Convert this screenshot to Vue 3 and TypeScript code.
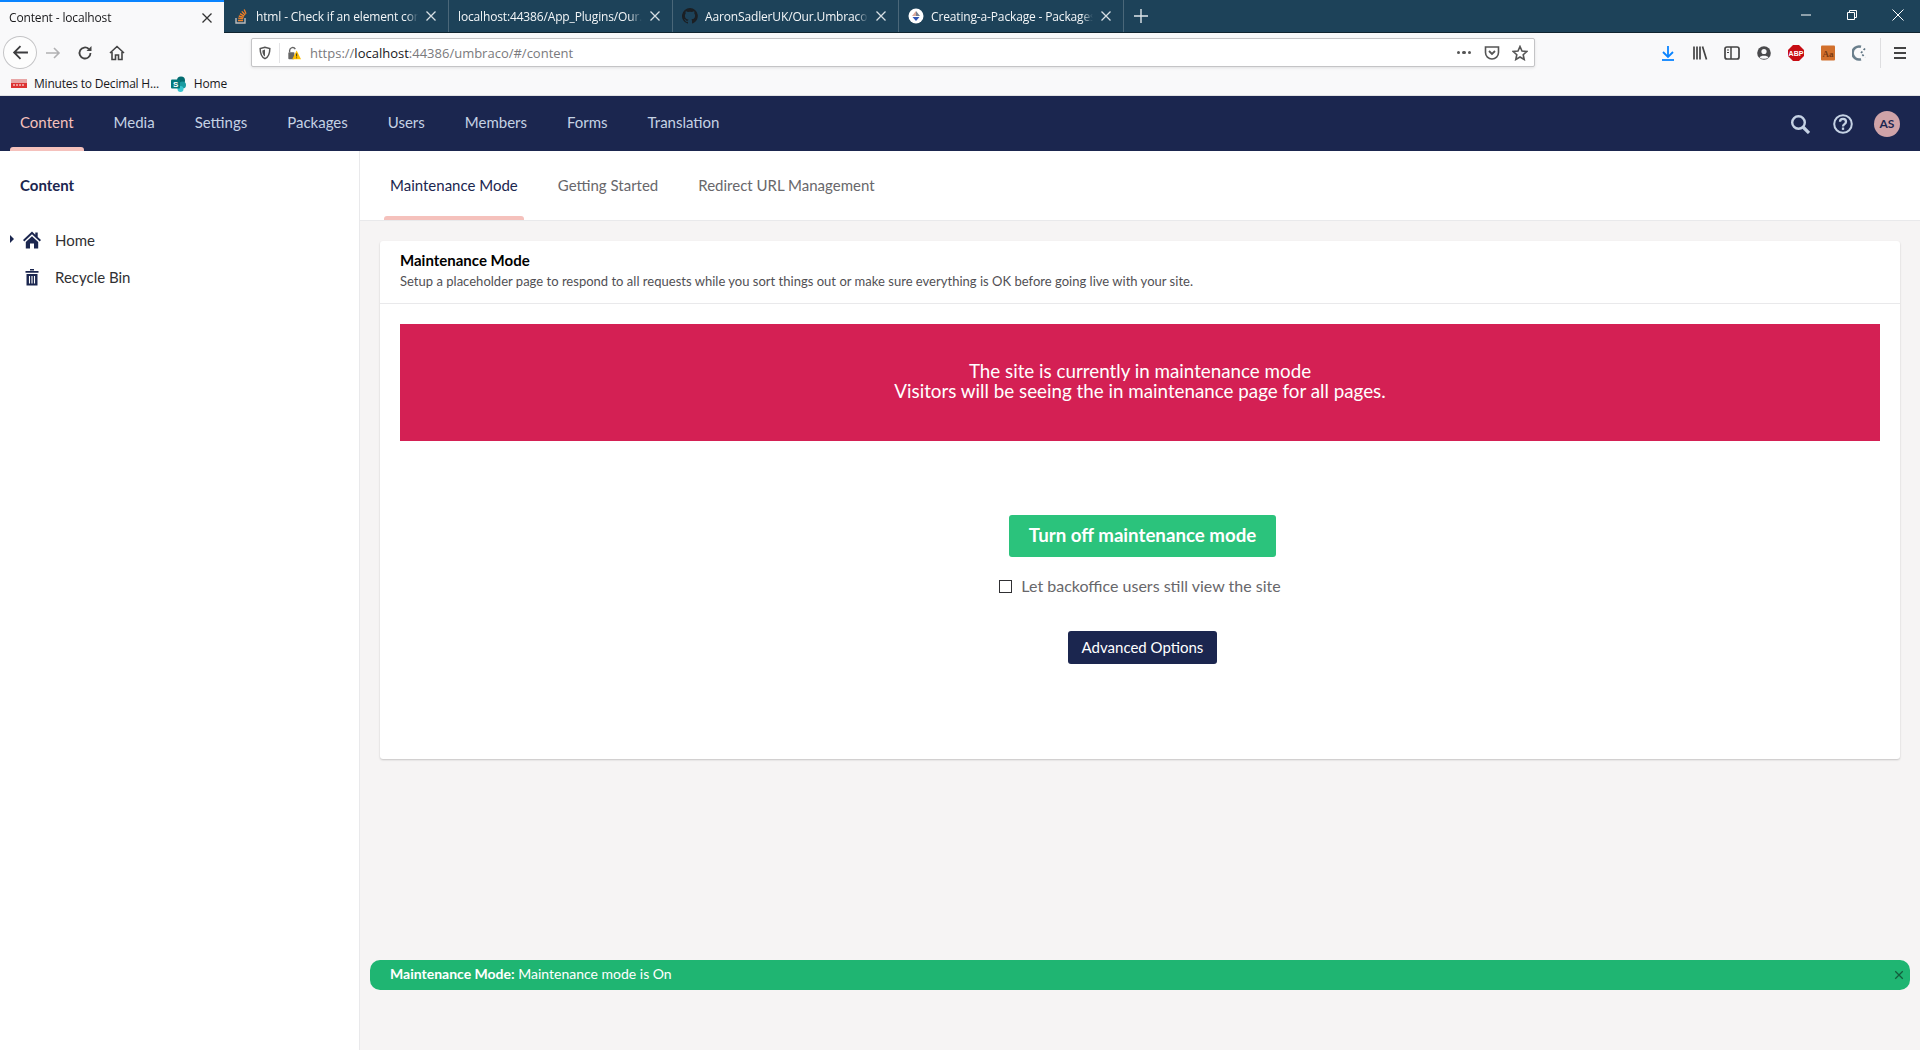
<script setup lang="ts">
interface BrowserTab {
  title: string
  icon: string
  width: number
}

const browserTabs: BrowserTab[] = [
  { title: 'Content - localhost', icon: '', width: 224 },
  { title: 'html - Check if an element contains a class', icon: 'so', width: 225 },
  { title: 'localhost:44386/App_Plugins/Our.Umbraco', icon: '', width: 224 },
  { title: 'AaronSadlerUK/Our.Umbraco.Maintenance', icon: 'gh', width: 226 },
  { title: 'Creating-a-Package - Packages', icon: 'pk', width: 225 }
]

const sections = ['Content', 'Media', 'Settings', 'Packages', 'Users', 'Members', 'Forms', 'Translation']
const dashboards = ['Maintenance Mode', 'Getting Started', 'Redirect URL Management']
</script>

<template>
  <div class="page">
    <div class="tabstrip">
      <div
        v-for="(tab, i) in browserTabs"
        :key="tab.title"
        :class="['btab', i === 0 ? 'btab-active' : '']"
        :style="{ width: `${tab.width}px` }"
      >
        <svg v-if="tab.icon === 'so'" class="favicon" viewBox="0 0 16 16">
          <path d="M3 10v5h9v-5" fill="none" stroke="#bcbbbb" stroke-width="1.4" />
          <path d="M5 12.5h5M5.2 10.2l5 .5M5.8 8l4.800 1.300M7 5.600l4.200 2.500M8.800 3.400l3.400 3.600M11.200 1.400l1.800 4.400" stroke="#f48024" stroke-width="1.300" fill="none" />
        </svg>
        <svg v-else-if="tab.icon === 'gh'" class="favicon" viewBox="0 0 16 16">
          <path fill="#1b1f23" d="M8 0a8 8 0 0 0-2.500 15.600c.4.100.5-.2.5-.4v-1.400c-2.200.5-2.700-1-2.700-1-.4-.9-.9-1.200-.9-1.200-.7-.5.100-.5.100-.5.800.100 1.200.800 1.200.800.700 1.200 1.900.900 2.300.700.100-.5.300-.9.500-1.100-1.800-.2-3.600-.9-3.600-4 0-.9.300-1.600.800-2.100-.1-.2-.4-1 .1-2.100 0 0 .7-.2 2.200.8a7.600 7.600 0 0 1 4 0c1.500-1 2.200-.8 2.200-.8.400 1.100.200 1.900.100 2.100.5.600.8 1.300.8 2.100 0 3.100-1.900 3.700-3.700 3.900.3.300.6.800.6 1.500v2.200c0 .2.100.5.600.4A8 8 0 0 0 8 0z" />
        </svg>
        <svg v-else-if="tab.icon === 'pk'" class="favicon" viewBox="0 0 16 16">
          <circle cx="8" cy="8" r="7.500" fill="#fff" />
          <path d="M8 3 4 8h4z" fill="#d9a79a" />
          <path d="M8 3l4 5H8z" fill="#77808f" />
          <path d="M4.500 9h7L8 13z" fill="#2f55b5" />
        </svg>
        <span class="btab-title">{{ tab.title }}</span>
        <svg class="btab-close" viewBox="0 0 12 12">
          <path d="M1.500 1.500l9 9M10.500 1.500l-9 9" stroke="currentColor" stroke-width="1.300" fill="none" />
        </svg>
      </div>
      <svg class="newtab" viewBox="0 0 14 14">
        <path d="M7 0v14M0 7h14" stroke="#dfe6ea" stroke-width="1.400" />
      </svg>
      <div class="winctl">
        <svg viewBox="0 0 12 12"><path d="M1 6h10" stroke="#fff" /></svg>
        <svg viewBox="0 0 12 12"><path d="M1.500 3.500h7v7h-7zM3.500 3.500v-2h7v7h-2" stroke="#fff" fill="none" /></svg>
        <svg viewBox="0 0 12 12"><path d="M.5.500l11 11M11.500.500l-11 11" stroke="#fff" fill="none" /></svg>
      </div>
    </div>

    <div class="toolbar">
      <div class="back">
        <svg viewBox="0 0 16 16" width="17" height="17">
          <path d="M15 8H2M8 2 2 8l6 6" stroke="#3c3c3e" stroke-width="1.700" fill="none" />
        </svg>
      </div>
      <svg class="tool" viewBox="0 0 16 16">
        <path d="M1 8h13M9 3l5 5-5 5" stroke="#b1b1b3" stroke-width="1.600" fill="none" />
      </svg>
      <svg class="tool" viewBox="0 0 16 16">
        <path d="M13.500 8a5.500 5.500 0 1 1-1.700-4" stroke="#444" stroke-width="1.800" fill="none" />
        <path d="M14.500 1v5h-5z" fill="#444" />
      </svg>
      <svg class="tool" viewBox="0 0 16 16">
        <path d="M1 8l7-6.500L15 8M3 7v7.500h3.500V10h3v4.500H13V7" stroke="#444" stroke-width="1.600" fill="none" />
      </svg>
      <div class="urlbar">
        <svg class="urlicon" viewBox="0 0 16 16">
          <path d="M8 1.500 2.500 3c0 5 .5 9 5.500 11.500C13 12 13.500 8 13.500 3z" stroke="#555" stroke-width="1.700" fill="none" />
          <path d="M8 4v8c-2.400-1.500-3-4-3-7z" fill="#555" />
        </svg>
        <span class="urlsep"></span>
        <svg class="urlicon" viewBox="0 0 16 16">
          <path d="M3 7V5a3.500 3.500 0 0 1 6.500-1.500" stroke="#666" stroke-width="1.600" fill="none" />
          <rect x="1.500" y="7" width="7" height="8" rx="1" fill="#666" />
          <path d="M11 5l5 10H6z" fill="#ffbf00" />
          <path d="M11 8.500v3.500M11 13v1" stroke="#222" />
        </svg>
        <span class="url"><span class="dim">https://</span><b>localhost</b><span class="dim">:44386/umbraco/#/content</span></span>
        <span class="dots"><i></i><i></i><i></i></span>
        <svg class="urlend" viewBox="0 0 16 16">
          <path d="M1.500 2h13v5.500a6.500 6.500 0 0 1-13 0z" stroke="#555" stroke-width="1.600" fill="none" />
          <path d="M5 6l3 3 3-3" stroke="#555" stroke-width="1.800" fill="none" />
        </svg>
        <svg class="urlend" viewBox="0 0 16 16">
          <path d="M8 1.500l2 4.500 4.800.5-3.600 3.200 1 4.800L8 12l-4.200 2.500 1-4.800L1.200 6.500 6 6z" stroke="#555" stroke-width="1.600" fill="none" />
        </svg>
      </div>
      <div class="tools-right">
        <svg class="tool" viewBox="0 0 16 16">
          <path d="M8 1v10M3 7l5 5 5-5" stroke="#0a84ff" stroke-width="1.800" fill="none" />
          <path d="M2 15h12" stroke="#0a84ff" stroke-width="1.800" />
        </svg>
        <svg class="tool" viewBox="0 0 16 16">
          <path d="M2 1.500v13M5 1.500v13M8 1.500v13M10.500 1.500l4 13" stroke="#444" stroke-width="1.700" fill="none" />
        </svg>
        <svg class="tool" viewBox="0 0 16 16">
          <rect x="1" y="2" width="14" height="12" rx="2" stroke="#444" stroke-width="1.700" fill="none" />
          <path d="M7 2v12" stroke="#444" stroke-width="1.500" />
          <path d="M3 5h2M3 7.500h2" stroke="#444" />
        </svg>
        <svg class="tool" viewBox="0 0 16 16">
          <circle cx="8" cy="8" r="6.800" fill="#4a4a4c" />
          <circle cx="8" cy="6.500" r="2.600" fill="#f9f9fa" />
          <path d="M3.500 12.500c1-2.500 8-2.500 9 0-2 1.800-7 1.800-9 0z" fill="#f9f9fa" />
        </svg>
        <svg class="tool" viewBox="0 0 16 16">
          <path d="M5 0h6l5 5v6l-5 5H5l-5-5V5z" fill="#c70d13" />
          <text x="8" y="10.800" text-anchor="middle" class="abp">ABP</text>
        </svg>
        <svg class="tool" viewBox="0 0 16 16">
          <rect x="1" y="0.500" width="14" height="15" rx="1" fill="#d2702c" />
          <text x="8" y="11.500" text-anchor="middle" class="aa">Aa</text>
        </svg>
        <svg class="tool" viewBox="0 0 16 16">
          <path d="M9 1.800a6.500 6.500 0 1 0 0 12.400" stroke="#6a7f8c" stroke-width="2.600" fill="none" />
          <path d="M13 3.500 9 8l4 4.500" stroke="#5f7482" stroke-width="1.800" stroke-dasharray="2 2" fill="none" />
        </svg>
        <span class="toolsep"></span>
        <svg class="tool menu-btn" viewBox="0 0 16 16">
          <path d="M2 3h12M2 8h12M2 13h12" stroke="#444" stroke-width="1.900" />
        </svg>
      </div>
    </div>

    <div class="bookmarks">
      <span class="bm">
        <svg class="favicon" viewBox="0 0 16 16">
          <rect y="3" width="16" height="4" fill="#e8a6a6" />
          <rect y="7" width="16" height="5" fill="#d33" />
          <path d="M2 9h12" stroke="#fff" stroke-dasharray="2 1" />
        </svg>
        Minutes to Decimal H...
      </span>
      <span class="bm">
        <svg class="favicon" viewBox="0 0 16 16">
          <circle cx="10" cy="4.500" r="4" fill="#036c70" />
          <circle cx="11.500" cy="9" r="3.500" fill="#1a9ba1" />
          <circle cx="9.500" cy="13" r="3" fill="#37c6d0" />
          <rect y="3.500" width="9" height="9" rx="1" fill="#03787c" />
          <text x="4.500" y="11" text-anchor="middle" class="sp">S</text>
        </svg>
        Home
      </span>
    </div>

    <header class="appnav">
      <nav class="sections">
        <a v-for="(s, i) in sections" :key="s" :class="['section', i === 0 ? 'section-active' : '']">{{ s }}</a>
      </nav>
      <div class="nav-tools">
        <svg viewBox="0 0 20 20" class="nav-icon search-icon">
          <circle cx="8.500" cy="8.500" r="6.300" stroke="#c5d2e4" stroke-width="2.400" fill="none" />
          <path d="M13 13l6 6" stroke="#c5d2e4" stroke-width="3.200" />
        </svg>
        <svg viewBox="0 0 20 20" class="nav-icon">
          <circle cx="10" cy="10" r="8.800" stroke="#c5d2e4" stroke-width="2" fill="none" />
          <path d="M7 7.800c0-4 6-4 6 0 0 2.400-3 2.200-3 4.600" stroke="#c5d2e4" stroke-width="2.300" fill="none" />
          <path d="M10 13.500v2.400" stroke="#c5d2e4" stroke-width="2.300" />
        </svg>
        <span class="avatar">AS</span>
      </div>
    </header>

    <div class="app-body">
      <aside class="sidebar">
        <h3 class="tree-title">Content</h3>
        <ul class="tree">
          <li class="tree-item">
            <span class="caret"></span>
            <svg class="tree-icon" viewBox="0 0 18 18">
              <path d="M9 .5 0 9l1.300 1.400L9 3.300l7.700 7.100L18 9l-3.300-3.100V1.500h-2.400v2.200z" fill="#1b264f" />
              <path d="M2.800 11 9 5.200l6.200 5.800v6.500h-4.200v-5H7v5H2.800z" fill="#1b264f" />
            </svg>
            Home
          </li>
          <li class="tree-item">
            <svg class="tree-icon" viewBox="0 0 18 18">
              <path d="M2.500 3h13v1.800h-13zM7 1h4v1.500H7z" fill="#1b264f" />
              <path d="M3.500 6h11v11.500h-11z" fill="#1b264f" />
              <path d="M6.500 8v7.500M9 8v7.500M11.500 8v7.500" stroke="#fff" stroke-width="1.100" />
            </svg>
            Recycle Bin
          </li>
        </ul>
      </aside>

      <main class="main">
        <div class="dash-tabs">
          <a v-for="(d, i) in dashboards" :key="d" :class="['dash-tab', i === 0 ? 'dash-active' : '']">{{ d }}</a>
        </div>
        <div class="dash-content">
          <section class="card">
            <div class="card-head">
              <div class="card-title">Maintenance Mode</div>
              <div class="card-sub">Setup a placeholder page to respond to all requests while you sort things out or make sure everything is OK before going live with your site.</div>
            </div>
            <div class="card-body">
              <div class="banner">
                <div>The site is currently in maintenance mode</div>
                <div>Visitors will be seeing the in maintenance page for all pages.</div>
              </div>
              <div class="actions">
                <button class="btn-off">Turn off maintenance mode</button>
                <label class="check"><span class="box"></span>Let backoffice users still view the site</label>
                <button class="btn-adv">Advanced Options</button>
              </div>
            </div>
          </section>
        </div>
        <div class="toast">
          <span><b>Maintenance Mode:</b> Maintenance mode is On</span>
          <svg viewBox="0 0 12 12" class="toast-x">
            <path d="M1.500 1.500l9 9M10.500 1.500l-9 9" stroke="#145c3c" stroke-width="1.500" />
          </svg>
        </div>
      </main>
    </div>
  </div>
</template>

<style>
html, body {
  margin: 0;
  overflow: hidden;
}
</style>

<style scoped>
.page {
  width: 1920px;
  height: 1050px;
  display: flex;
  flex-direction: column;
  font-family: Lato, sans-serif;
  overflow: hidden;
  background: #fff;
}

.tabstrip {
  height: 33px;
  flex: none;
  display: flex;
  align-items: stretch;
  background: #1d4259;
  border-bottom: 1px solid #10242f;
  box-sizing: border-box;
  font-family: "Open Sans", sans-serif;
  font-size: 12px;
  letter-spacing: -0.15px;
  color: #f3f6f8;
}

.btab {
  display: flex;
  align-items: center;
  box-sizing: border-box;
  padding: 0 11px 0 9px;
  gap: 7px;
  border-right: 1px solid #4a6779;
  overflow: hidden;
}

.btab-active {
  background: #f9f9fa;
  color: #18181a;
  border-top: 2px solid #0a84ff;
  border-right: none;
  height: 33px;
}

.btab-title {
  flex: 1;
  min-width: 0;
  padding-top: 1px;
  white-space: nowrap;
  overflow: hidden;
  -webkit-mask-image: linear-gradient(90deg, #000 93%, transparent);
  mask-image: linear-gradient(90deg, #000 93%, transparent);
}

.btab-active .btab-title {
  padding-top: 0;
}

.favicon {
  width: 16px;
  height: 16px;
  flex: none;
}

.btab-close {
  width: 12px;
  height: 12px;
  flex: none;
  color: #d7dfe4;
}

.btab-active .btab-close {
  color: #333;
}

.newtab {
  width: 14px;
  height: 14px;
  align-self: center;
  margin-left: 10px;
}

.winctl {
  margin-left: auto;
  display: flex;
  align-items: center;
  gap: 34px;
  padding: 0 16px 2px 0;
}

.winctl svg {
  width: 12px;
  height: 12px;
}

.toolbar {
  height: 39px;
  flex: none;
  display: flex;
  align-items: center;
  background: #f9f9fa;
  padding-left: 3px;
}

.back {
  width: 34px;
  height: 33px;
  flex: none;
  border: 1px solid #c4c4c6;
  border-radius: 50%;
  background: #fdfdfd;
  display: flex;
  align-items: center;
  justify-content: center;
  box-sizing: border-box;
  margin-right: 8px;
}

.tool {
  width: 16px;
  height: 16px;
  flex: none;
  margin-right: 16px;
}

.menu-btn {
  margin-right: 0;
}

.urlbar {
  width: 1284px;
  height: 29px;
  flex: none;
  box-sizing: border-box;
  margin-left: 110px;
  display: flex;
  align-items: center;
  background: #fff;
  border: 1px solid #c4c4c6;
  border-radius: 2px;
  box-shadow: 0 1px 3px rgba(0, 0, 0, 0.1);
  padding: 0 6px 0 6px;
  font-family: "Open Sans", sans-serif;
  font-size: 13px;
}

.urlicon {
  width: 14px;
  height: 14px;
  flex: none;
}

.urlsep {
  width: 1px;
  height: 20px;
  background: #e4e4e6;
  margin: 0 7px;
}

.url {
  margin-left: 9px;
  padding-top: 1px;
  flex: 1;
  color: #18181a;
}

.url b {
  font-weight: 400;
}

.dim {
  color: #7a7a7d;
}

.dots {
  display: flex;
  gap: 2px;
  margin-right: 1px;
}

.dots i {
  width: 3.5px;
  height: 3.5px;
  border-radius: 50%;
  background: #555;
}

.urlend {
  width: 16px;
  height: 16px;
  margin-left: 12px;
}

.tools-right {
  display: flex;
  flex: none;
  align-items: center;
  margin-left: 125px;
}

.toolsep {
  width: 1px;
  height: 30px;
  background: #dedee0;
  margin: 0 11px 0 -4px;
}

.bookmarks {
  height: 24px;
  flex: none;
  display: flex;
  align-items: center;
  gap: 12px;
  padding: 0 0 0 11px;
  background: #f9f9fa;
  border-bottom: 1px solid #e2e2e4;
  box-sizing: border-box;
  font-family: "Open Sans", sans-serif;
  font-size: 12px;
  letter-spacing: -0.2px;
  color: #18181a;
}

.bm {
  display: flex;
  align-items: center;
  gap: 7px;
}

.abp {
  font: 700 7px "Liberation Sans", sans-serif;
  fill: #fff;
}

.aa {
  font: 700 9px "Liberation Serif", serif;
  fill: #7a3a12;
}

.sp {
  font: 700 8px "Liberation Sans", sans-serif;
  fill: #fff;
}

.appnav {
  height: 55px;
  flex: none;
  display: flex;
  align-items: stretch;
  justify-content: space-between;
  background: #1b264f;
}

.sections {
  display: flex;
  padding-left: 0;
}

.section {
  position: relative;
  display: flex;
  align-items: center;
  padding: 0 20px 4px;
  font-size: 15px;
  color: #c5d2e4;
}

.section-active {
  color: #f5c1bc;
}

.section-active::after {
  content: "";
  position: absolute;
  left: 10px;
  right: 10px;
  bottom: 0;
  height: 4px;
  border-radius: 3px 3px 0 0;
  background: #f5c1bc;
}

.nav-tools {
  display: flex;
  align-items: center;
  gap: 21px;
  padding-right: 20px;
}

.nav-icon {
  width: 20px;
  height: 20px;
}

.search-icon {
  margin-right: 2px;
}

.avatar {
  width: 26px;
  height: 26px;
  border-radius: 50%;
  background: #cfa3a8;
  color: #1b264f;
  font-size: 12px;
  font-weight: 700;
  display: flex;
  align-items: center;
  justify-content: center;
}

.app-body {
  flex: 1;
  min-height: 0;
  display: flex;
}

.sidebar {
  width: 360px;
  flex: none;
  box-sizing: border-box;
  border-right: 1px solid #e9e9eb;
  background: #fff;
  color: #1b264f;
}

.tree-title {
  margin: 0;
  padding: 25px 0 0 20px;
  font-size: 15px;
  line-height: 18px;
  font-weight: 700;
}

.tree {
  list-style: none;
  margin: 27px 0 0;
  padding: 0;
}

.tree-item {
  position: relative;
  display: flex;
  align-items: center;
  height: 37px;
  padding-left: 23px;
  gap: 14px;
  font-size: 15px;
  color: #303033;
}

.caret {
  position: absolute;
  left: 10px;
  top: 14px;
  border-left: 4px solid #1b264f;
  border-top: 4px solid transparent;
  border-bottom: 4px solid transparent;
}

.tree-icon {
  width: 18px;
  height: 18px;
  flex: none;
}

.main {
  position: relative;
  flex: 1;
  min-width: 0;
  display: flex;
  flex-direction: column;
  background: #f6f4f4;
}

.dash-tabs {
  height: 70px;
  flex: none;
  box-sizing: border-box;
  display: flex;
  background: #fff;
  border-bottom: 1px solid #e9e9eb;
  padding-left: 24px;
}

.dash-tab {
  position: relative;
  box-sizing: border-box;
  padding: 25px 20px 0;
  font-size: 15px;
  line-height: 18px;
  color: #68676b;
}

.dash-tab:first-child {
  padding: 25px 6px 0;
  margin-right: 34px;
}

.dash-active {
  color: #1b264f;
}

.dash-active::after {
  content: "";
  position: absolute;
  left: 0;
  right: 0;
  bottom: 0;
  height: 4px;
  border-radius: 3px 3px 0 0;
  background: #f5c1bc;
}

.dash-tab:nth-child(2) {
  padding-left: 0;
}

.dash-content {
  padding: 20px 20px 0;
}

.card {
  height: 518px;
  background: #fff;
  border-radius: 3px;
  box-shadow: 0 1px 2px rgba(0, 0, 0, 0.2);
}

.card-head {
  height: 63px;
  box-sizing: border-box;
  padding: 10px 20px 0;
  border-bottom: 1px solid #e9e9eb;
}

.card-title {
  font-size: 15px;
  line-height: 18px;
  font-weight: 700;
  color: #000;
}

.card-sub {
  padding-top: 2px;
  font-size: 13px;
  line-height: 20px;
  letter-spacing: 0.015px;
  color: #515054;
}

.card-body {
  padding: 20px;
}

.banner {
  height: 117px;
  box-sizing: border-box;
  padding-top: 37px;
  background: #d42054;
  color: #fff;
  text-align: center;
  font-size: 18.8px;
  line-height: 20px;
}

.actions {
  display: flex;
  flex-direction: column;
  align-items: center;
  padding: 74px 0 0 5px;
}

.btn-off {
  width: 267px;
  height: 42px;
  padding: 0 0 3px;
  border: none;
  border-radius: 3px;
  background: #2bc37c;
  color: #fff;
  font: 700 18.7px Lato, sans-serif;
}

.check {
  display: flex;
  align-items: center;
  margin: 17px 0 0 -5px;
  font-size: 16px;
  line-height: 24px;
  color: #68676b;
}

.box {
  width: 11px;
  height: 11px;
  border: 1px solid #303033;
  margin-right: 9px;
}

.btn-adv {
  width: 149px;
  height: 33px;
  padding: 0 0 2px;
  margin-top: 33px;
  border: none;
  border-radius: 3px;
  background: #1b264f;
  color: #fff;
  font: 400 15px Lato, sans-serif;
}

.toast {
  position: absolute;
  left: 10px;
  right: 10px;
  top: 809px;
  height: 30px;
  box-sizing: border-box;
  padding: 0 6px 0 20px;
  display: flex;
  align-items: center;
  justify-content: space-between;
  background: #1fb572;
  border-radius: 10px;
  color: #fff;
  font-size: 14px;
}

.toast span {
  margin-bottom: 4px;
}

.toast-x {
  width: 10px;
  height: 10px;
}
</style>
